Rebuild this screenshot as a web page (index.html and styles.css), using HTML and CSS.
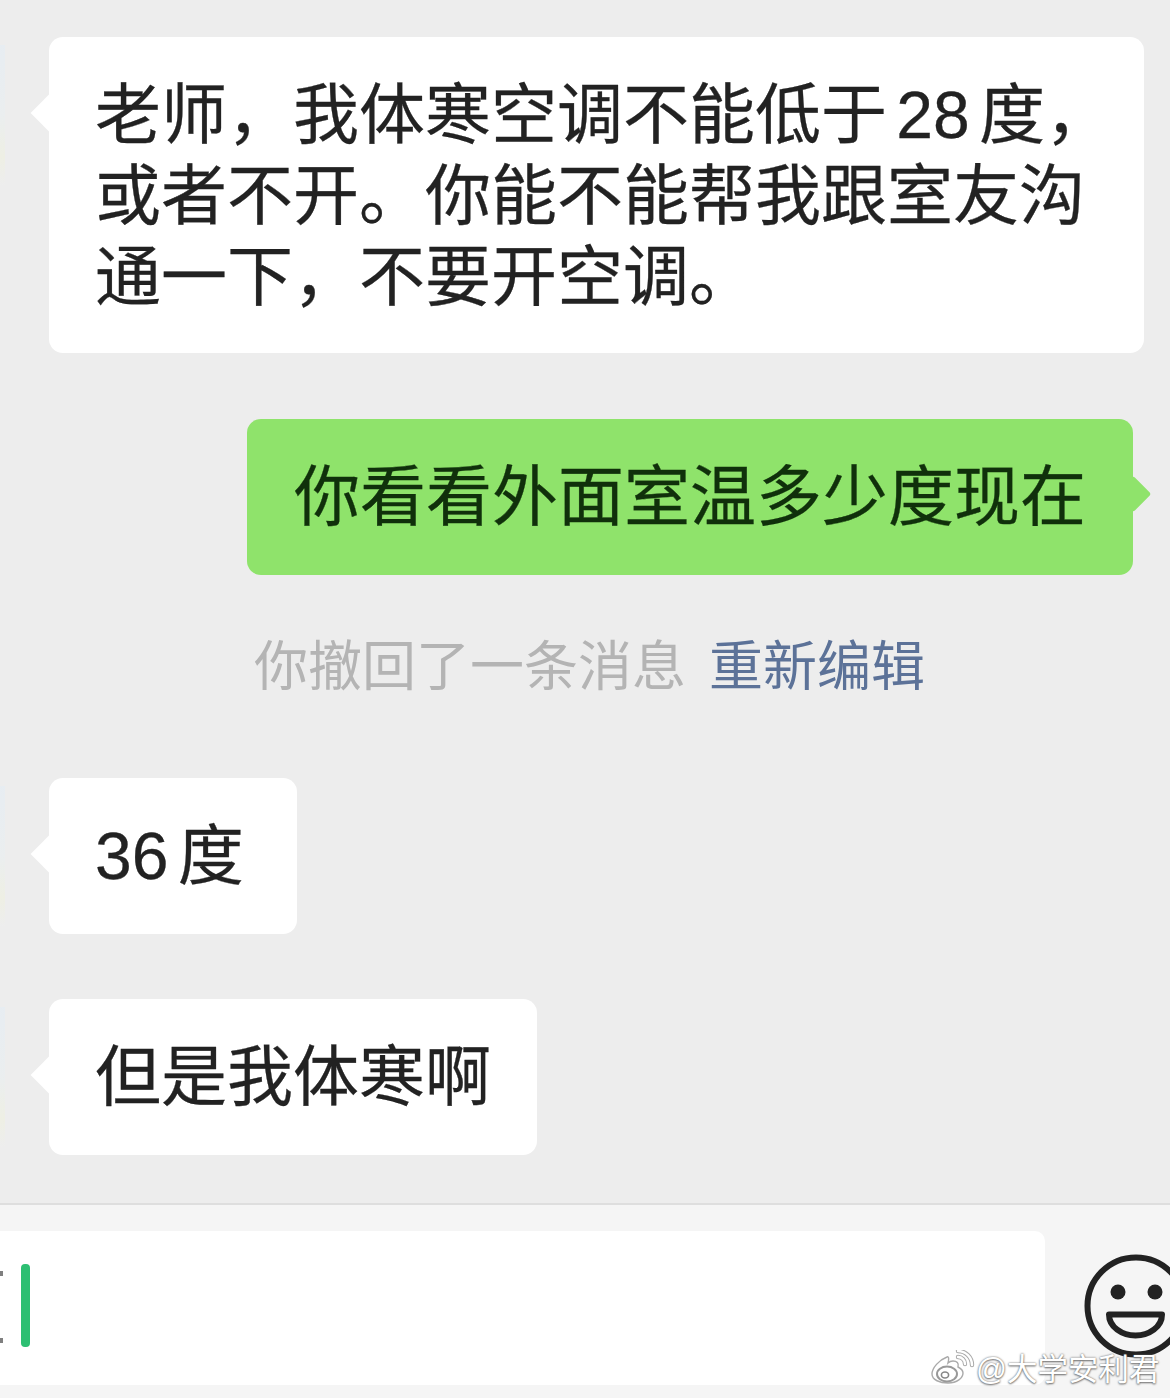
FILE: index.html
```html
<!DOCTYPE html>
<html lang="zh-CN">
<head>
<meta charset="utf-8">
<title>聊天记录</title>
<link rel="stylesheet" href="styles.css">
</head>
<body>
<main class="screen">
  <section class="chat">
    <div class="bubble incoming wide">老师，我体寒空调不能低于 28 度，<br>或者不开。你能不能帮我跟室友沟<br>通一下，不要开空调。</div>
    <div class="bubble outgoing">你看看外面室温多少度现在</div>
    <p class="recall">你撤回了一条消息<a class="reedit">重新编辑</a></p>
    <div class="bubble incoming short">36 度</div>
    <div class="bubble incoming">但是我体寒啊</div>
  </section>
  <footer class="composer">
    <div class="voice-edge"></div>
    <div class="input"><span class="caret"></span></div>
    <svg class="smile" viewBox="0 0 104 104" aria-hidden="true">
      <circle cx="52" cy="52" r="48.5" fill="none" stroke="#222" stroke-width="6"/>
      <circle cx="34" cy="38" r="7.5" fill="#222"/>
      <circle cx="71" cy="38" r="7.5" fill="#222"/>
      <path d="M25 60.5 H78 C78 73 65 81.5 51.5 81.5 C38 81.5 25 73 25 60.5 Z" fill="none" stroke="#222" stroke-width="6" stroke-linejoin="round"/>
    </svg>
  </footer>
  <div class="watermark">
    <svg class="weibo" viewBox="0 0 46 38" aria-hidden="true">
      <path d="M17 7 C9 10 2 18 2 24 C2 30 10 33 18 33 C27 33 33 28 33 23 C33 20 30 18 28 17 C29 13 27 11 23 11 C21 11 19 12 18 13 C19 9 19 6 17 7 Z" fill="#fff" stroke="#aaa" stroke-width="1.4"/>
      <ellipse cx="17" cy="24" rx="10" ry="7.5" fill="none" stroke="#999" stroke-width="2"/>
      <ellipse cx="15" cy="25" rx="3.6" ry="3" fill="none" stroke="#888" stroke-width="1.6"/>
      <path d="M28 7 A7 7 0 0 1 35 14 M28 1 A14 14 0 0 1 42 15" fill="none" stroke="#aaa" stroke-width="4.4" stroke-linecap="round"/>
      <path d="M28 7 A7 7 0 0 1 35 14 M28 1 A14 14 0 0 1 42 15" fill="none" stroke="#fff" stroke-width="2.4" stroke-linecap="round"/>
    </svg>
    <span>@大学安利君</span>
  </div>
</main>
</body>
</html>
```

FILE: styles.css
```css
* { box-sizing: border-box; }
html, body { margin: 0; padding: 0; }
body { width: 1170px; height: 1398px; overflow: hidden; background: #ededed; }
.screen {
  position: relative;
  width: 1170px;
  height: 1398px;
  display: flex;
  flex-direction: column;
  overflow: hidden;
  font-family: "Liberation Sans", "Noto Sans CJK SC", sans-serif;
}
.chat {
  flex: 0 0 1203px;
  display: flex;
  flex-direction: column;
  align-items: flex-start;
  padding: 37px 37px 0 49px;
  background: #ededed;
}
.bubble {
  position: relative;
  padding: 38px 46px 37px;
  border-radius: 14px;
  background: #fff;
  color: #222;
  font-size: 66px;
  line-height: 81px;
  word-spacing: -9px;
  white-space: nowrap;
  -webkit-text-stroke: .3px currentColor;
  filter: blur(.5px);
}
.wide { width: 1095px; padding-bottom: 35px; margin-bottom: 66px; }
.short { width: 248px; margin-bottom: 65px; }
.incoming::before, .outgoing::after {
  content: "";
  position: absolute;
  width: 26px;
  height: 26px;
  background: inherit;
  transform: rotate(45deg);
}
.incoming::before { left: -13px; top: 63px; }
.incoming::after {
  content: "";
  position: absolute;
  left: -49px;
  top: 8px;
  width: 5px;
  height: 140px;
  opacity: .55;
  background: linear-gradient(#e2ecf5, #e8eef0 50%, #eef0dc 80%, #ededed);
}
.outgoing { align-self: flex-end; width: 886px; padding-left: 47px; background: #8fe36b; color: #10300b; }
.outgoing::after { right: -13px; top: 62px; border-radius: 3px; }
.recall {
  margin: 59px 0 0 205px;
  height: 144px;
  color: #b4b4b4;
  font-size: 54px;
  line-height: 66px;
  white-space: nowrap;
  filter: blur(.5px);
}
.reedit { margin-left: 23px; color: #5c7298; }
.composer {
  position: relative;
  flex: 1;
  padding: 26px 0 0;
  background: #f5f5f5;
  border-top: 2px solid #dedede;
}
.input {
  width: 1045px;
  height: 154px;
  padding: 33px 0 0 21px;
  border-radius: 0 10px 10px 0;
  background: #fff;
}
.caret {
  display: block;
  width: 9px;
  height: 83px;
  border-radius: 4px;
  background: #2dbf72;
  filter: blur(.5px);
}
.voice-edge {
  position: absolute;
  left: -4px;
  top: 66px;
  width: 7px;
  height: 72px;
  border: solid #555;
  border-width: 5px 0;
  opacity: .75;
}
.smile {
  position: absolute;
  left: 1084px;
  top: 49px;
  width: 104px;
  height: 104px;
  filter: blur(.6px);
}
.watermark {
  position: absolute;
  left: 930px;
  top: 1350px;
  display: flex;
  align-items: center;
  color: #fff;
  font-size: 30.5px;
  line-height: 38px;
  white-space: nowrap;
  text-shadow: 0 0 2px #666, 0 1px 2px #777;
}
.weibo { width: 46px; height: 38px; }
```
